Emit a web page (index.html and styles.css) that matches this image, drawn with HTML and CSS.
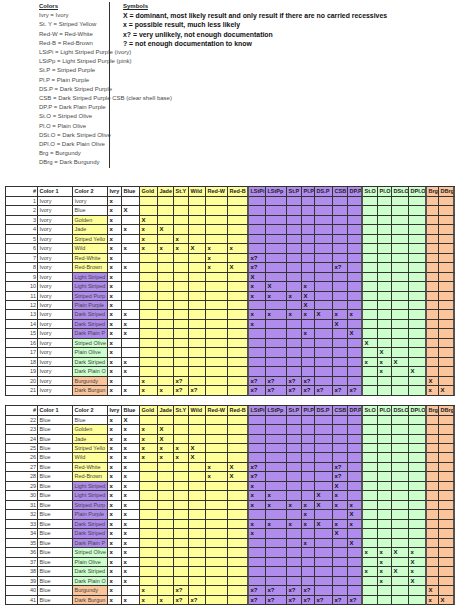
FILE: index.html
```html
<!DOCTYPE html>
<html>
<head>
<meta charset="utf-8">
<link rel="stylesheet" href="styles.css">
</head>
<body>
<div class="legend">
  <div class="colors">
    <div class="lh">Colors</div>
    <div>Ivry = Ivory</div>
    <div>St. Y = Striped Yellow</div>
    <div>Red-W = Red-White</div>
    <div>Red-B = Red-Brown</div>
    <div>LStPi = Light Striped Purple (ivory)</div>
    <div>LStPp = Light Striped Purple (pink)</div>
    <div>St.P = Striped Purple</div>
    <div>Pl.P = Plain Purple</div>
    <div>DS.P = Dark Striped Purple</div>
    <div>CSB = Dark Striped Purple CSB (clear shell base)</div>
    <div>DP.P = Dark Plain Purple</div>
    <div>St.O = Striped Olive</div>
    <div>Pl.O = Plain Olive</div>
    <div>DSt.O = Dark Striped Olive</div>
    <div>DPl.O = Dark Plain Olive</div>
    <div>Brg = Burgundy</div>
    <div>DBrg = Dark Burgundy</div>
  </div>
  <div class="symbols">
    <div class="lh">Symbols</div>
    <div>X = dominant, most likely result and only result if there are no carried recessives</div>
    <div>x = possible result, much less likely</div>
    <div>x? = very unlikely, not enough documentation</div>
    <div>? = not enough documentation to know</div>
  </div>
</div>
<div class="sheet" id="t1"></div>
<div class="sheet sheet2" id="t2"></div>
<script src="script.js"></script>
</body>
</html>
```
FILE: styles.css
```css
* { box-sizing: border-box; }
body {
  margin: 0;
  background: #fff;
  font-family: "Liberation Sans", Arial, sans-serif;
  color: #222;
  width: 474px;
  height: 610px;
  overflow: hidden;
}
.legend {
  display: flex;
  padding: 2px 0 0 39px;
  font-size: 6px;
  line-height: 9.2px;
}
.colors {
  width: 70px;
  white-space: nowrap;
  color: #4a4a4a;
}
.symbols {
  border-left: 1px solid #333;
  padding-left: 13px;
  font-weight: bold;
  font-size: 6.9px;
  color: #111;
  white-space: nowrap;
}
.lh {
  font-weight: bold;
  text-decoration: underline;
  color: #222;
  font-size: 6px;
}
.sheet {
  margin: 18.7px 0 0 5px;
  width: 450px;
  border-top: 1px solid #333;
}
.sheet2 { margin-top: 9.47px; }
.row {
  display: grid;
  grid-template-columns: 33px 35px 35px 14px 18px 18px 16px 15px 17px 22px 21px 17px 21px 15px 13px 18px 15px 15px 15px 14px 17px 18px 12px 16px;
  height: 9.47px;
}
.cell {
  border-right: 1px solid #333;
  border-bottom: 1px solid #333;
  font-size: 5.5px;
  line-height: 8.4px;
  padding-left: 1.5px;
  white-space: nowrap;
  overflow: hidden;
  color: #444;
}
.row .cell:first-child { border-left: 1px solid #333; }
.head .cell { font-weight: bold; color: #222; }
.num { text-align: right; padding-right: 1px; }
.w { background: #fff; }
.y { background: #ffff99; }
.p { background: #b08cec; }
.g { background: #ccffcc; }
.o { background: #fbc49b; }
.sep { border-right: 2px solid #555; }
.mk { font-weight: bold; color: #111; font-size: 6px; }
```
FILE: script.js
```js
const COLS = [
  ["Ivry","w"],["Blue","w"],["Gold","y"],["Jade","y"],["St.Y","y"],["Wild","y"],["Red-W","y"],["Red-B","y sep"],
  ["LStPi","p"],["LStPp","p"],["St.P","p"],["Pl.P","p"],["DS.P","p"],["CSB","p"],["DP.P","p sep"],
  ["St.O","g"],["Pl.O","g"],["DSt.O","g"],["DPl.O","g sep"],["Brg","o"],["DBrg","o sep"]
];
const C2 = [
  ["Ivory","w"],["Blue","w"],["Golden","y"],["Jade","y"],["Striped Yello","y"],["Wild","y"],["Red-White","y"],["Red-Brown","y"],
  ["Light Striped","p"],["Light Striped","p"],["Striped Purp","p"],["Plain Purple","p"],
  ["Dark Striped","p"],["Dark Striped","p"],["Dark Plain P","p"],
  ["Striped Olive","g"],["Plain Olive","g"],["Dark Striped","g"],["Dark Plain O","g"],["Burgundy","o"],["Dark Burgun","o"]
];
const T1 = [
  "0x","0x 1X","0x 2X","0x 1x 2x 3X","0x 2x 4x","0x 1x 2x 3x 4x 5X 6x 7x","0x 6x 8x?","0x 1x 6x 7X 8x? 13x?",
  "0x 8X","0x 8x 9X 11x","0x 8x 9x 10x 11X","0x 11X","0x 1x 8x 9x 10x 11x 12X 13x 14x","0x 1x 8x 13X","0x 1x 11x 14X",
  "0x 15X","0x 16X","0x 1x 15x 16x 17X","0x 1x 16x 18X","0x 2x 4x? 8x? 9x? 10x? 11x? 19X",
  "0x 1x 2x 3x 4x? 5x? 8x? 9x? 10x? 11x? 12x? 13x? 14x? 19x 20X"
];
const T2 = [
  null,"0x 1X","0x 1x 2x 3X","0x 1x 2x 3X","0x 1x 2x 3x 4x 5X","0x 1x 2x 3x 4x 5X","0x 1x 6x 7X 8x? 13x?","0x 1x 6x 7X 8x? 13x?",
  "0x 1x 8x 13X","0x 1x 8x 9x 12X 13x","0x 1x 8x 9x 10x 11x 12X 13x 14x","0x 1x 11x 14X","0x 1x 8x 9x 10x 11x 12X 13x 14x","0x 1x 8x 13X","0x 1x 11x 14X",
  "0x 1x 15x 16x 17X 18x","0x 1x 16x 18X","0x 1x 15x 16x 17X 18x","0x 1x 16x 18X","0x 2x 4x? 8x? 9x? 10x? 11x? 19X",
  "0x 1x 2x 3x 4x? 5x? 8x? 9x? 10x? 11x? 12x? 13x? 14x? 19x 20X"
];
function cell(cls, text) {
  const d = document.createElement("div");
  d.className = "cell " + cls;
  if (text) d.textContent = text;
  return d;
}
function header(t) {
  const r = document.createElement("div");
  r.className = "row head";
  r.appendChild(cell("num w", "#"));
  r.appendChild(cell("w", "Color 1"));
  r.appendChild(cell("w", "Color 2"));
  COLS.forEach(c => r.appendChild(cell(c[1], c[0])));
  t.appendChild(r);
}
function rows(t, data, start, c1) {
  data.forEach((marks, i) => {
    if (marks === null) return;
    const arr = [];
    marks.split(" ").forEach(tok => {
      const m = tok.match(/^(\d+)(.+)$/);
      arr[+m[1]] = m[2];
    });
    const r = document.createElement("div");
    r.className = "row";
    r.appendChild(cell("num w", String(start + i)));
    r.appendChild(cell("w", c1));
    r.appendChild(cell(C2[i][1], C2[i][0]));
    COLS.forEach((c, j) => r.appendChild(cell(c[1] + " mk", arr[j] || "")));
    t.appendChild(r);
  });
}
const t1 = document.getElementById("t1");
header(t1);
rows(t1, T1, 1, "Ivory");
const t2 = document.getElementById("t2");
header(t2);
rows(t2, T2, 21, "Blue");
```
